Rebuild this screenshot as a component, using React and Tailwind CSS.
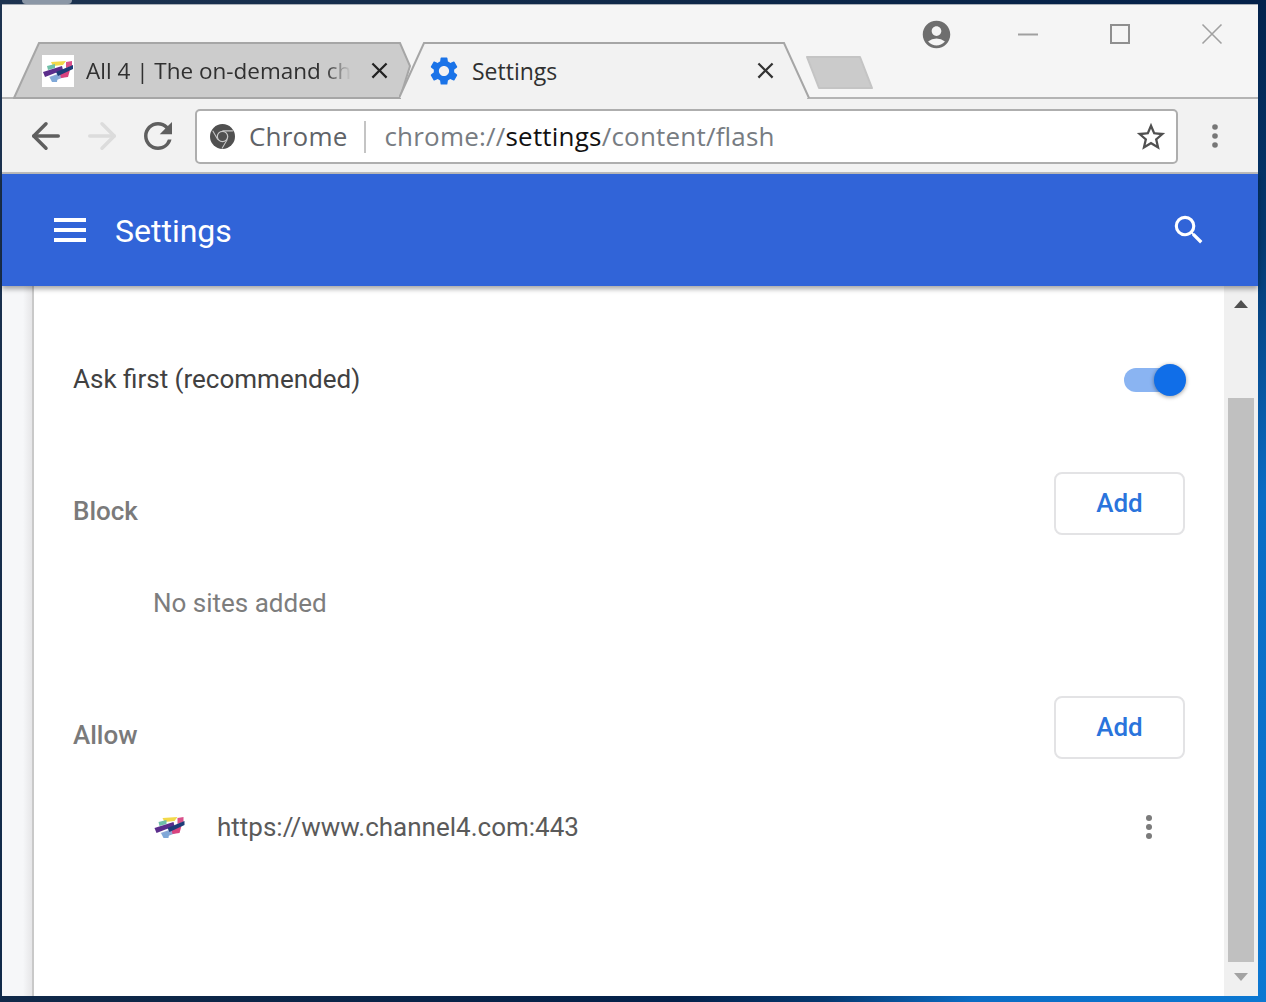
import React from "react";
import { MdSettings, MdAccountCircle, MdSearch, MdClose, MdRefresh, MdStarBorder } from "react-icons/md";
import { ArrowLeft, ArrowRight } from "lucide-react";

const ui = "font-['Open_Sans','Noto_Sans',sans-serif]";
const page = "font-['Roboto',sans-serif]";

function C4Icon({ className }) {
  return (
    <svg viewBox="0 0 32 24" className={className}>
      <path d="M9 3 L24 2 L21 6 L11 7 Z" fill="#f2d94a" />
      <path d="M5 7 L13 5 L13 9 L6 11 Z" fill="#6fbfa8" />
      <path d="M24 3 L30 2 L30 7 L24 9 Z" fill="#d9508a" />
      <path d="M7 18 L27 11 L25 17 L12 22 Z" fill="#8fa8d6" />
      <path d="M18 15 L28 11 L26 18 L19 19 Z" fill="#d9437f" />
      <path d="M8 19 L16 16 L15 23 L10 23 Z" fill="#7fa8d8" />
      <path d="M1 13 L20 7 L21 11 L3 18 Z" fill="#5b2d8c" />
      <path d="M14 13 L31 6 L31 10 L16 17 Z" fill="#1d3c78" />
    </svg>
  );
}

function ChromeIcon() {
  return (
    <svg viewBox="0 0 24 24" className="h-[25px] w-[25px] shrink-0">
      <circle cx="12" cy="12" r="12" fill="#505050" />
      <circle cx="12" cy="12" r="5" fill="#505050" stroke="#c8c8c8" strokeWidth="1.2" />
      <path d="M12 6.6 H22 M7.4 14.8 L2.6 6.5 M16.6 14.8 L11.5 23.5" stroke="#c8c8c8" strokeWidth="1" fill="none" />
    </svg>
  );
}

function Dots({ color, r, className }) {
  return (
    <svg viewBox="0 0 8 26" className={className}>
      <circle cx="4" cy="4" r={r} fill={color} />
      <circle cx="4" cy="13" r={r} fill={color} />
      <circle cx="4" cy="22" r={r} fill={color} />
    </svg>
  );
}

function AddButton() {
  return (
    <button className="flex h-[63px] w-[131px] items-center justify-center rounded-[8px] border-2 border-[#e3e3e5] bg-white text-[26px] font-medium text-[#2a74dc]">
      Add
    </button>
  );
}

function TabStrip() {
  return (
    <div className="flex h-[94px] shrink-0 justify-between border-b-2 border-[#b4b4b4] bg-[#f5f5f5]">
      <div className="flex items-end self-end pl-[11px]">
        <div className="relative -mb-[2px] flex h-[57px] w-[400px] items-center pl-[29px] pr-[20px]">
          <svg viewBox="0 0 400 57" className="absolute inset-0 h-full w-full">
            <path d="M1 56 L26 1 H387 L397 24 L387 56 Z" fill="#cccccc" stroke="#a6a6a6" strokeWidth="2" />
          </svg>
          <div className="relative flex h-[32px] w-[32px] shrink-0 items-center justify-center bg-white">
            <C4Icon className="h-[24px] w-[32px]" />
          </div>
          <span className={`${ui} relative ml-[12px] whitespace-nowrap text-[22.5px] leading-[32px] text-[#303030] [mask-image:linear-gradient(to_right,black_90%,transparent)]`}>
            All 4 | The on-demand ch
          </span>
          <MdClose className="relative ml-auto h-[27px] w-[27px] shrink-0 text-[#222222]" />
        </div>
        <div className="relative z-10 -mb-[2px] -ml-[14px] flex h-[57px] w-[412px] items-center pl-[29px] pr-[32px]">
          <svg viewBox="0 0 412 57" className="absolute inset-0 h-full w-full">
            <path d="M0 56 L25 1 H385 L410 56" fill="#f2f2f2" stroke="#a6a6a6" strokeWidth="2" />
            <rect x="2" y="55" width="406" height="2" fill="#f2f2f2" />
          </svg>
          <MdSettings className="relative -ml-[1px] h-[34px] w-[34px] shrink-0 text-[#1a73e8]" />
          <span className={`${ui} relative ml-[11px] text-[23px] leading-[32px] text-[#303030]`}>Settings</span>
          <MdClose className="relative ml-auto h-[27px] w-[27px] shrink-0 text-[#333333]" />
        </div>
        <svg viewBox="0 0 70 36" className="mb-[6px] -ml-[7px] h-[36px] w-[70px]">
          <path d="M3 2 H56 L68 33 H15 Z" fill="#cbcbcb" stroke="#c4c4c4" strokeWidth="2" strokeLinejoin="round" />
        </svg>
      </div>
      <div className="flex items-start pr-[35px] pt-[13px]">
        <MdAccountCircle className="h-[33px] w-[33px] text-[#6e6e6e]" />
        <svg viewBox="0 0 22 22" className="ml-[64px] mt-[5px] h-[22px] w-[22px]">
          <path d="M1 11.5 H21" stroke="#a0a0a0" strokeWidth="2" />
        </svg>
        <svg viewBox="0 0 22 22" className="ml-[70px] mt-[5px] h-[22px] w-[22px]">
          <rect x="2" y="2" width="18" height="18" fill="none" stroke="#8f8f8f" strokeWidth="2" />
        </svg>
        <svg viewBox="0 0 22 22" className="ml-[70px] mt-[5px] h-[22px] w-[22px]">
          <path d="M1.5 1.5 L20.5 20.5 M20.5 1.5 L1.5 20.5" stroke="#a0a0a0" strokeWidth="1.6" />
        </svg>
      </div>
    </div>
  );
}

function Toolbar() {
  return (
    <div className="flex h-[75px] shrink-0 items-center border-b-2 border-[#bdbdbd] bg-[#f2f2f2] pl-[23px] pt-[1px]">
      <ArrowLeft className="h-[42px] w-[42px] shrink-0 text-[#5f5f5f]" strokeWidth={2} />
      <ArrowRight className="ml-[14px] h-[42px] w-[42px] shrink-0 text-[#dcdcdc]" strokeWidth={2} />
      <MdRefresh className="ml-[14px] h-[42px] w-[42px] shrink-0 text-[#5f5f5f]" />
      <div className={`${ui} ml-[16px] flex h-[55px] w-[983px] shrink-0 items-center rounded-[5px] border-2 border-[#aeaeae] bg-white pl-[13px] pr-[8px] pt-[1px] text-[26px] tracking-[0.2px]`}>
        <ChromeIcon />
        <span className="ml-[14px] text-[#5f6368]">Chrome</span>
        <span className="ml-[17px] h-[32px] w-[2px] bg-[#c4c4c4]" />
        <span className="ml-[18px] whitespace-nowrap text-[#777c82]">
          chrome://<span className="text-[#111111]">settings</span>/content/flash
        </span>
        <MdStarBorder className="ml-auto h-[34px] w-[34px] shrink-0 text-[#505050]" />
      </div>
      <Dots color="#777777" r={2.8} className="ml-[33px] h-[26px] w-[8px] shrink-0" />
    </div>
  );
}

function Header() {
  return (
    <div className={`${page} relative z-10 flex h-[112px] shrink-0 items-center bg-[#3164d8] pl-[52px] pr-[50px] shadow-[0_3px_5px_rgba(0,0,0,0.35)]`}>
      <div className="flex w-[34px] flex-col gap-[6px]">
        <span className="h-[4px] w-[32px] bg-white" />
        <span className="h-[4px] w-[32px] bg-white" />
        <span className="h-[4px] w-[32px] bg-white" />
      </div>
      <span className="ml-[27px] pt-[2px] text-[32px] leading-none text-white">Settings</span>
      <MdSearch className="ml-auto h-[38px] w-[38px] text-white" />
    </div>
  );
}

function Content() {
  return (
    <div className={`${page} flex min-h-0 flex-1`}>
      <div className="w-[32px] shrink-0 border-r-2 border-[#c9c9c9] bg-[linear-gradient(to_right,#f6f7f9_70%,#e6e6e8)]" />
      <div className="flex-1 bg-white px-[39px] pt-[70px]">
        <div className="flex h-[48px] items-center justify-between">
          <span className="-mt-[2px] text-[26px] text-[#414141]">Ask first (recommended)</span>
          <div className="relative -mr-[1px] h-[32px] w-[62px]">
            <span className="absolute left-0 top-[4px] h-[24px] w-[56px] rounded-full bg-[#8ab4f2]" />
            <span className="absolute right-0 top-0 h-[32px] w-[32px] rounded-full bg-[#106ee8] shadow-[0_1px_4px_rgba(0,0,0,0.4)]" />
          </div>
        </div>
        <div className="mt-[68px] flex h-[63px] items-start justify-between">
          <span className="mt-[20px] text-[26px] font-medium text-[#7a7a7a]">Block</span>
          <AddButton />
        </div>
        <div className="mt-[48px] flex h-[40px] items-center pl-[80px] text-[26px] text-[#7d7d7d]">No sites added</div>
        <div className="mt-[73px] flex h-[63px] items-start justify-between">
          <span className="mt-[20px] text-[26px] font-medium text-[#7a7a7a]">Allow</span>
          <AddButton />
        </div>
        <div className="mt-[48px] flex h-[40px] items-center pl-[80px] pr-[32px]">
          <C4Icon className="h-[24px] w-[33px] shrink-0" />
          <span className="ml-[31px] text-[26px] text-[#5a5a5a]">https://www.channel4.com:443</span>
          <Dots color="#7b7b7b" r={3} className="ml-auto h-[26px] w-[8px] shrink-0" />
        </div>
      </div>
      <div className="flex w-[34px] shrink-0 flex-col items-center bg-[#f0f0f0]">
        <svg viewBox="0 0 14 8" className="mt-[14px] h-[8px] w-[14px] shrink-0">
          <path d="M7 0 L14 8 H0 Z" fill="#505050" />
        </svg>
        <div className="mt-[90px] h-[564px] w-[26px] shrink-0 bg-[#c0c0c0]" />
        <svg viewBox="0 0 14 8" className="mt-[11px] h-[8px] w-[14px] shrink-0">
          <path d="M0 0 H14 L7 8 Z" fill="#a3a3a3" />
        </svg>
      </div>
    </div>
  );
}

export default function App() {
  return (
    <div className="relative flex h-[1002px] w-[1266px] overflow-hidden bg-[linear-gradient(120deg,#1d3350_0%,#0d2748_40%,#03214a_68%,#04386f_76%,#0a6cc4_84%,#0c78d2_100%)] pb-[6px] pl-[2px] pr-[8px] pt-[4px]">
      <div className="absolute left-[22px] top-0 h-[4px] w-[50px] rounded-b-[6px] bg-[#8b97a6]" />
      <div className="flex min-w-0 flex-1 flex-col border-t border-[#aab0b8] bg-[#f5f5f5]">
        <TabStrip />
        <Toolbar />
        <Header />
        <Content />
      </div>
    </div>
  );
}
